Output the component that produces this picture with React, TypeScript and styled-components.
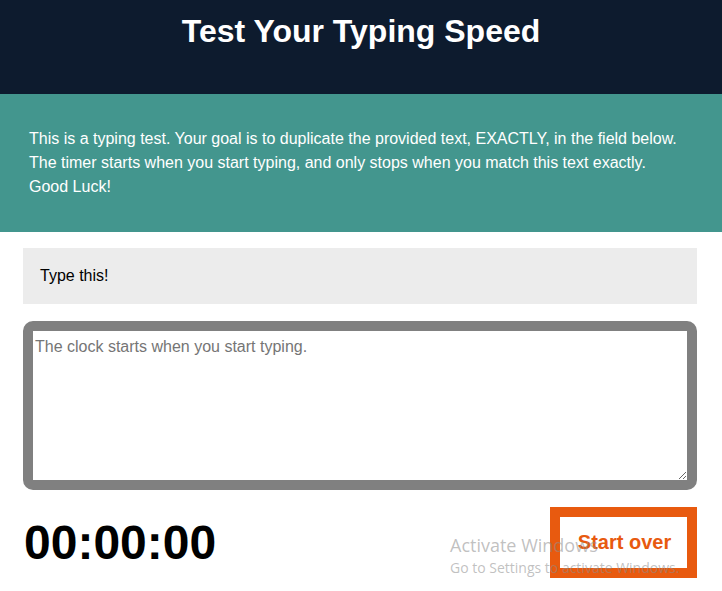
import * as React from 'react';
import styled, { createGlobalStyle } from 'styled-components';

const GlobalStyle = createGlobalStyle`
    html, body {
        margin: 0;
        padding: 0;
        background: #ffffff;
        font-family: "Liberation Sans", Arial, sans-serif;
    }
`;

const Page = styled.div`
    position: relative;
    width: 722px;
    min-height: 591px;
    overflow: hidden;
`;

const Header = styled.header`
    height: 94px;
    box-sizing: border-box;
    padding-top: 13px;
    background: #0d1b2e;
    text-align: center;
`;

const Title = styled.h1`
    margin: 0;
    font-size: 32px;
    line-height: 37px;
    font-weight: bold;
    color: #ffffff;
`;

const Intro = styled.section`
    padding: 33px 29px;
    background: #43968e;
    color: #ffffff;
    font-size: 16px;
    line-height: 24px;
`;

const Main = styled.main`
    display: flex;
    flex-direction: column;
    gap: 17px;
    padding: 16px 25px 0 23px;
`;

const Origin = styled.div`
    display: flex;
    align-items: center;
    height: 56px;
    padding: 0 17px;
    background: #ececec;
    font-size: 16px;
    color: #000000;
`;

const TypeArea = styled.textarea`
    display: block;
    width: 100%;
    height: 169px;
    box-sizing: border-box;
    margin: 0;
    padding: 7px 2px 3px;
    border: 10px solid #808080;
    border-radius: 10px;
    font-family: "Liberation Sans", Arial, sans-serif;
    font-size: 16px;
    color: #000000;
    resize: vertical;
    outline: none;
    &::placeholder {
        color: #757575;
    }
`;

const Meta = styled.div`
    display: flex;
    align-items: center;
    justify-content: space-between;
`;

const Timer = styled.div`
    margin-left: 1px;
    font-size: 48px;
    font-weight: bold;
    color: #000000;
    line-height: 55px;
`;

const ResetButton = styled.button`
    width: 147px;
    height: 71px;
    box-sizing: border-box;
    background: #ffffff;
    border: 10px solid #e85a0f;
    color: #e85a0f;
    font-family: "Liberation Sans", Arial, sans-serif;
    font-size: 20px;
    font-weight: bold;
    cursor: pointer;
    padding: 0 0 0 2px;
`;

const Watermark = styled.div`
    position: absolute;
    z-index: 2;
    left: 450px;
    top: 534px;
    font-family: "Open Sans", "Noto Sans", sans-serif;
    color: rgba(140, 140, 140, 0.55);
    pointer-events: none;
`;

const WatermarkLine = styled.div<{ $size: number; $line: number }>`
    font-size: ${p => p.$size}px;
    line-height: ${p => p.$line}px;
    white-space: nowrap;
`;

export default function App() {
    return (
        <Page>
            <GlobalStyle />
            <Header>
                <Title>Test Your Typing Speed</Title>
            </Header>
            <Intro>
                This is a typing test. Your goal is to duplicate the provided text, EXACTLY, in the field below.
                The timer starts when you start typing, and only stops when you match this text exactly.
                <br />
                Good Luck!
            </Intro>
            <Main>
                <Origin>Type this!</Origin>
                <TypeArea placeholder="The clock starts when you start typing." />
                <Meta>
                    <Timer>00:00:00</Timer>
                    <ResetButton>Start over</ResetButton>
                </Meta>
            </Main>
            <Watermark>
                <WatermarkLine $size={18} $line={23}>Activate Windows</WatermarkLine>
                <WatermarkLine $size={14} $line={22}>Go to Settings to activate Windows.</WatermarkLine>
            </Watermark>
        </Page>
    );
}
